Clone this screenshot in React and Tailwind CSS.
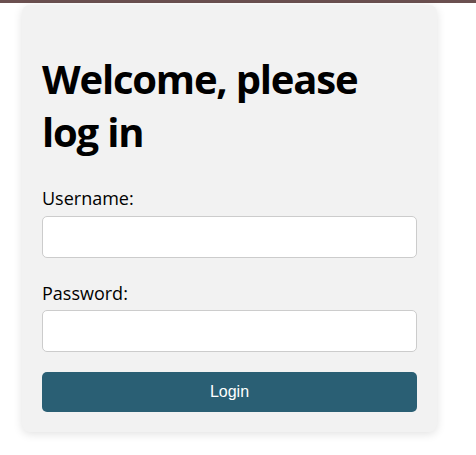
import React from 'react';

function LoginCard() {
  return (
    <div className="mt-[2px] ml-[22px] w-[415px] rounded-lg bg-[#f2f2f2] px-5 pb-5 pt-[47px] shadow-[0_2px_10px_rgba(0,0,0,0.12)]">
      <h1 className="text-[40px] font-bold leading-[53px] tracking-[-1.2px] text-black">Welcome, please log in</h1>
      <form className="mt-[28px] flex flex-col" onSubmit={(e) => e.preventDefault()}>
        <label className="text-[18px] leading-[24px] text-black">Username:</label>
        <input type="text" className="mt-[6px] h-[42px] w-full rounded-[5px] border border-[#cccccc] bg-white px-2" />
        <label className="mt-[23px] text-[18px] leading-[24px] text-black">Password:</label>
        <input type="password" className="mt-[5px] h-[42px] w-full rounded-[5px] border border-[#cccccc] bg-white px-2" />
        <button type="submit" className="mt-5 h-10 w-full rounded-[5px] bg-[#2a5f74] text-[16px] text-white" style={{ fontFamily: '"Liberation Sans", Arial, sans-serif' }}>
          Login
        </button>
      </form>
    </div>
  );
}

export default function App() {
  return (
    <div className="min-h-[455px] bg-white" style={{ fontFamily: '"Open Sans", "Noto Sans", sans-serif' }}>
      <div className="h-[3px] bg-[#6b5050]" />
      <LoginCard />
    </div>
  );
}
